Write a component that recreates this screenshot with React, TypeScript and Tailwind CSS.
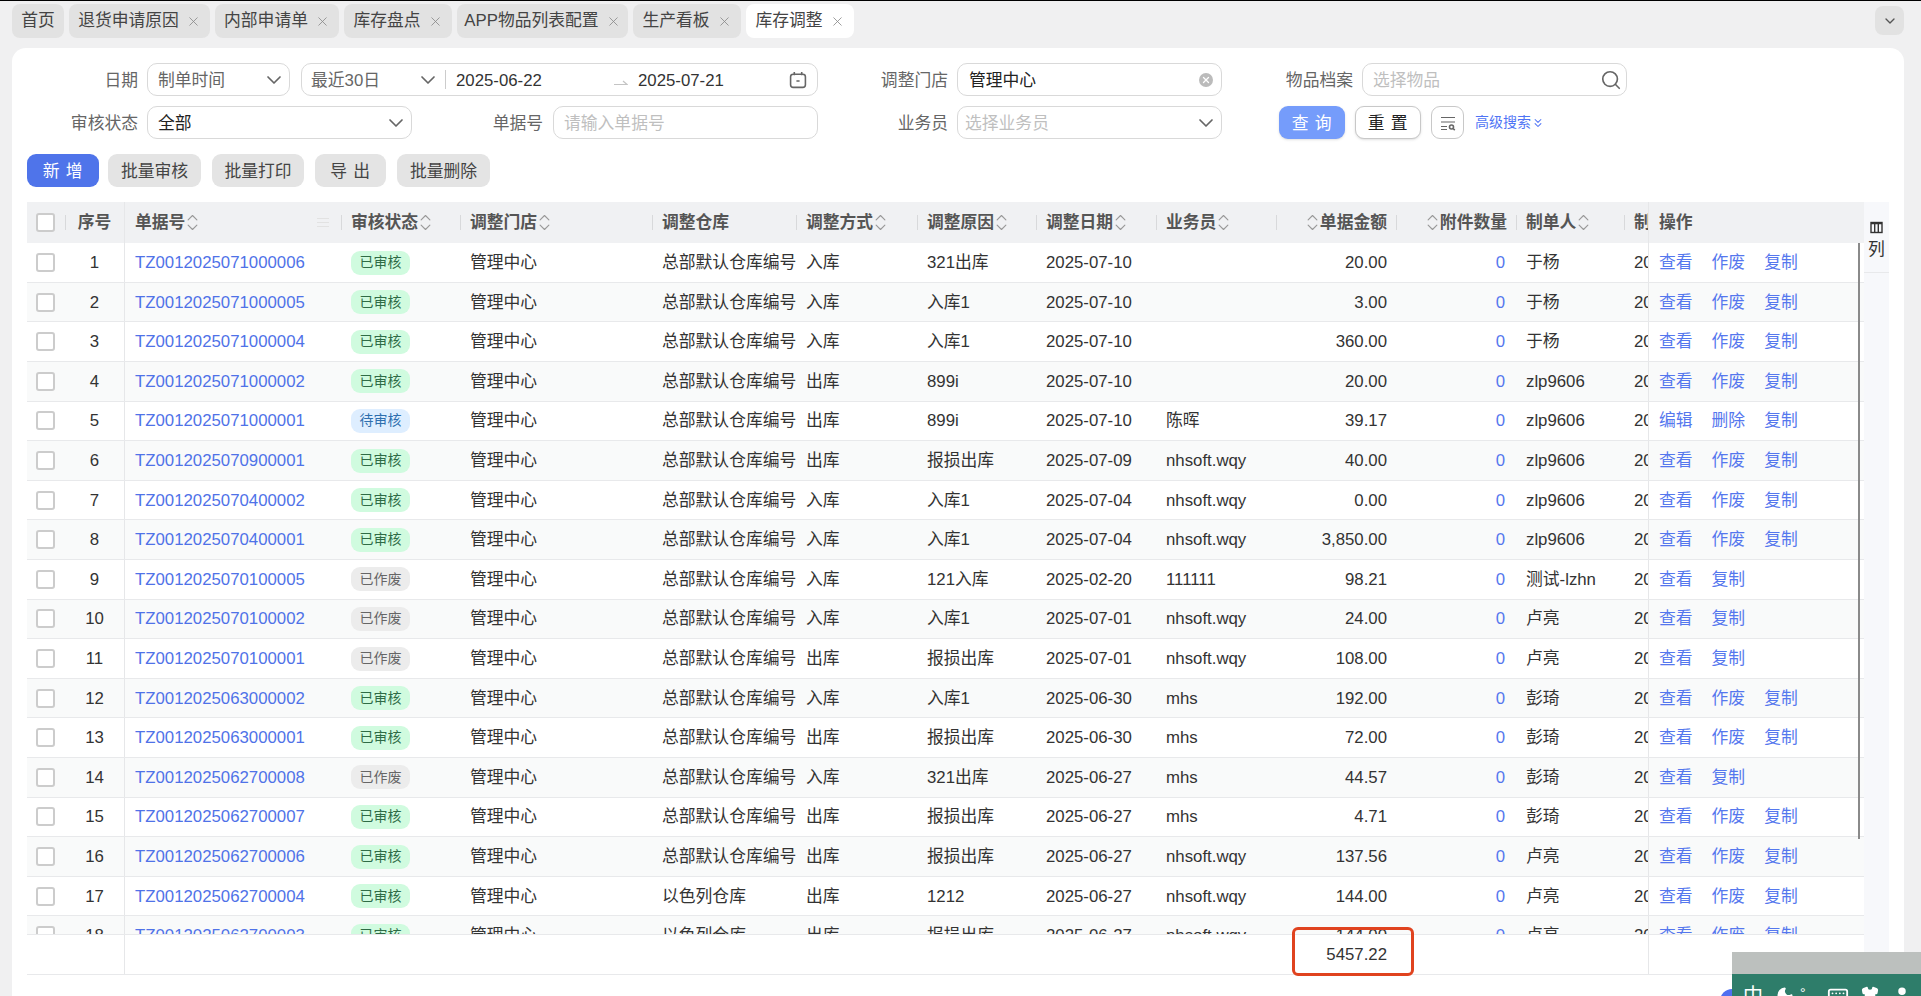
import React from "react";
import { ChevronDown, ChevronsDown, ChevronsUpDown, Keyboard, Moon, Search, Shirt, User, X } from "lucide-react";

const tabs = ["首页", "退货申请原因", "内部申请单", "库存盘点", "APP物品列表配置", "生产看板", "库存调整"];
const tabWidths = ["w-[52px]", "w-[141px]", "w-[124px]", "w-[108px]", "w-[171px]", "w-[108px]", "w-[108px]"];

const gridCols =
  "grid grid-cols-[38px_60px_216px_119px_192px_144px_121px_119px_120px_120px_120px_120px_108px_24px_216px]";

type Row = {
  id: string;
  status: "ok" | "wait" | "void";
  wh: string;
  way: string;
  reason: string;
  date: string;
  staff: string;
  amount: string;
  maker: string;
};

const main = "总部默认仓库编号";
const rows: Row[] = [
  { id: "TZ0012025071000006", status: "ok", wh: main, way: "入库", reason: "321出库", date: "2025-07-10", staff: "", amount: "20.00", maker: "于杨" },
  { id: "TZ0012025071000005", status: "ok", wh: main, way: "入库", reason: "入库1", date: "2025-07-10", staff: "", amount: "3.00", maker: "于杨" },
  { id: "TZ0012025071000004", status: "ok", wh: main, way: "入库", reason: "入库1", date: "2025-07-10", staff: "", amount: "360.00", maker: "于杨" },
  { id: "TZ0012025071000002", status: "ok", wh: main, way: "出库", reason: "899i", date: "2025-07-10", staff: "", amount: "20.00", maker: "zlp9606" },
  { id: "TZ0012025071000001", status: "wait", wh: main, way: "出库", reason: "899i", date: "2025-07-10", staff: "陈晖", amount: "39.17", maker: "zlp9606" },
  { id: "TZ0012025070900001", status: "ok", wh: main, way: "出库", reason: "报损出库", date: "2025-07-09", staff: "nhsoft.wqy", amount: "40.00", maker: "zlp9606" },
  { id: "TZ0012025070400002", status: "ok", wh: main, way: "入库", reason: "入库1", date: "2025-07-04", staff: "nhsoft.wqy", amount: "0.00", maker: "zlp9606" },
  { id: "TZ0012025070400001", status: "ok", wh: main, way: "入库", reason: "入库1", date: "2025-07-04", staff: "nhsoft.wqy", amount: "3,850.00", maker: "zlp9606" },
  { id: "TZ0012025070100005", status: "void", wh: main, way: "入库", reason: "121入库", date: "2025-02-20", staff: "111111", amount: "98.21", maker: "测试-lzhn" },
  { id: "TZ0012025070100002", status: "void", wh: main, way: "入库", reason: "入库1", date: "2025-07-01", staff: "nhsoft.wqy", amount: "24.00", maker: "卢亮" },
  { id: "TZ0012025070100001", status: "void", wh: main, way: "出库", reason: "报损出库", date: "2025-07-01", staff: "nhsoft.wqy", amount: "108.00", maker: "卢亮" },
  { id: "TZ0012025063000002", status: "ok", wh: main, way: "入库", reason: "入库1", date: "2025-06-30", staff: "mhs", amount: "192.00", maker: "彭琦" },
  { id: "TZ0012025063000001", status: "ok", wh: main, way: "出库", reason: "报损出库", date: "2025-06-30", staff: "mhs", amount: "72.00", maker: "彭琦" },
  { id: "TZ0012025062700008", status: "void", wh: main, way: "入库", reason: "321出库", date: "2025-06-27", staff: "mhs", amount: "44.57", maker: "彭琦" },
  { id: "TZ0012025062700007", status: "ok", wh: main, way: "出库", reason: "报损出库", date: "2025-06-27", staff: "mhs", amount: "4.71", maker: "彭琦" },
  { id: "TZ0012025062700006", status: "ok", wh: main, way: "出库", reason: "报损出库", date: "2025-06-27", staff: "nhsoft.wqy", amount: "137.56", maker: "卢亮" },
  { id: "TZ0012025062700004", status: "ok", wh: "以色列仓库", way: "出库", reason: "1212", date: "2025-06-27", staff: "nhsoft.wqy", amount: "144.00", maker: "卢亮" },
  { id: "TZ0012025062700003", status: "ok", wh: "以色列仓库", way: "出库", reason: "报损出库", date: "2025-06-27", staff: "nhsoft.wqy", amount: "144.00", maker: "卢亮" },
];

const badgeStyle = {
  ok: "bg-[#d0fbdf] text-[#2f6b46]",
  wait: "bg-[#deeeff] text-[#2f6fae]",
  void: "bg-[#ececec] text-[#666666]",
};
const badgeText = { ok: "已审核", wait: "待审核", void: "已作废" };

// the faint staff watermark that lies over the whole page
const watermarks = Array.from({ length: 24 }, (_, i) => i);

const Checkbox = () => <span className="block h-[19px] w-[19px] rounded-[3px] border-2 border-[#cccccc] bg-white" />;

const Field = ({ className, children }: { className: string; children: React.ReactNode }) => (
  <div className={`flex h-[33px] items-center rounded-[10px] border-[1.5px] border-[#d9d9d9] bg-white ${className}`}>
    {children}
  </div>
);

const Label = ({ className, children }: { className: string; children: React.ReactNode }) => (
  <div className={`shrink-0 pr-[9px] text-right text-[#666666] ${className}`}>{children}</div>
);

const GrayButton = ({ className, children }: { className: string; children: React.ReactNode }) => (
  <button className={`h-[33px] rounded-[9px] bg-[#e4e4e4] pt-[2px] text-[#444444] ${className}`}>{children}</button>
);

const Chevron = () => <ChevronDown size={24} strokeWidth={1.7} className="shrink-0 text-[#666666]" />;

const SortIcon = ({ right }: { right?: boolean }) => (
  <ChevronsUpDown
    size={21}
    strokeWidth={1.3}
    className={`shrink-0 text-[#999999] ${right ? "-mr-[3px] -ml-[6px]" : "-ml-[3px] -mr-[6px]"}`}
  />
);

const HeadCell = ({ title, sort, right, sep = true }: { title: string; sort?: boolean; right?: boolean; sep?: boolean }) => (
  <div className={`relative flex items-center overflow-hidden whitespace-nowrap ${right ? "justify-end pr-[9px]" : "pl-[10px]"}`}>
    {sep && <span className="absolute left-0 top-[13px] h-[15px] w-px bg-[#d8d9db]" />}
    {right && sort && <SortIcon right />}
    <span>{title}</span>
    {!right && sort && <SortIcon />}
  </div>
);

const Ops = ({ row }: { row: Row }) => {
  const links = row.status === "wait" ? ["编辑", "删除", "复制"] : row.status === "void" ? ["查看", "复制"] : ["查看", "作废", "复制"];
  return (
    <div className="flex items-center gap-[19px] border-l border-[#e6e7e9] pl-[10px] text-[#5577ee]">
      {links.map((l) => (
        <span key={l}>{l}</span>
      ))}
    </div>
  );
};

const CalendarIcon = () => (
  <svg width="18" height="18" viewBox="0 0 17 17" fill="none" stroke="#666666" strokeWidth="1.5" className="shrink-0">
    <rect x="1.5" y="3" width="14" height="12.5" rx="2.5" />
    <path d="M5 1v3M12 1v3M7 9.5h3" />
  </svg>
);

const TableSearchIcon = () => (
  <svg width="18" height="18" viewBox="0 0 18 18" fill="none" stroke="#666666" strokeWidth="1.2">
    <path d="M2 3.5h14M2 8h14M2 12.5h6M2 15.5h6" />
    <circle cx="12.5" cy="13" r="2" strokeWidth="1.6" />
    <path d="M14 14.5l1.8 1.6" strokeWidth="1.6" />
  </svg>
);

const ColumnsIcon = () => (
  <svg width="13" height="13" viewBox="0 0 13 13" fill="none" stroke="#333333" strokeWidth="1.4">
    <rect x="1" y="1.5" width="11" height="10" />
    <path d="M1 2.5h11M4.7 2v9.5M8.3 2v9.5" />
  </svg>
);

const App = () => {
  return (
    <div className="relative h-[996px] w-full overflow-hidden border-t border-black bg-[#f0f0f1] text-[16.8px] text-[#333333] [font-family:'Liberation_Sans','Noto_Sans_CJK_SC',sans-serif]">
      {/* tab strip */}
      <div className="flex h-[47px] items-start justify-between pl-[12px] pr-[17px] pt-[3px]">
        <div className="flex gap-[5px]">
          {tabs.map((t, i) => (
            <div
              key={t}
              className={`flex h-[34px] items-center justify-center gap-[7px] whitespace-nowrap rounded-[8px] ${tabWidths[i]} ${
                i === 6 ? "bg-white" : "bg-[#e2e2e2]"
              } text-[#444444]`}
            >
              {t}
              {i > 0 && <X size={15} strokeWidth={1.3} className="text-[#888888]" />}
            </div>
          ))}
        </div>
        <div className="mt-[2px] flex h-[29px] w-[29px] items-center justify-center rounded-[8px] bg-[#e2e2e2]">
          <ChevronDown size={16} strokeWidth={2} className="text-[#555555]" />
        </div>
      </div>

      {/* main card */}
      <div className="ml-[12px] mr-[17px] h-[960px] rounded-t-[14px] bg-white pt-[15px]">
        <div className="flex items-center">
          <Label className="w-[135px] pt-[2px]">日期</Label>
          <Field className="w-[143px] justify-between pl-[10px] pr-[3px] text-[#666666]">
            <span className="pt-[2px]">制单时间</span>
            <Chevron />
          </Field>
          <Field className="ml-[11px] w-[517px] pl-[9px] pr-[10px]">
            <span className="w-[105px] pt-[2px] text-[#666666]">最近30日</span>
            <Chevron />
            <span className="ml-[5px] h-[19px] w-px shrink-0 bg-[#cccccc]" />
            <span className="ml-[10px] w-[158px] pt-[2px]">2025-06-22</span>
            <svg width="14" height="8" viewBox="0 0 14 8" fill="none" stroke="#c4c4c4" strokeWidth="1.2" className="mt-[4px] shrink-0">
              <path d="M0 6.5h13L9 3" />
            </svg>
            <span className="ml-[10px] flex-1 pt-[2px]">2025-07-21</span>
            <CalendarIcon />
          </Field>
          <Label className="w-[139px] pt-[2px]">调整门店</Label>
          <Field className="w-[265px] justify-between pl-[11px] pr-[8px] text-[#222222]">
            <span className="pt-[2px]">管理中心</span>
            <span className="flex h-[14px] w-[14px] items-center justify-center rounded-full bg-[#bbbbbb]">
              <X size={10} strokeWidth={3} className="text-white" />
            </span>
          </Field>
          <Label className="w-[140px] pt-[2px]">物品档案</Label>
          <Field className="w-[265px] justify-between pl-[10px] pr-[4px] text-[#bfbfbf]">
            <span className="pt-[2px]">选择物品</span>
            <Search size={22} strokeWidth={1.8} className="text-[#666666]" />
          </Field>
        </div>

        <div className="mt-[10px] flex items-center">
          <Label className="w-[135px] pt-[3px]">审核状态</Label>
          <Field className="w-[265px] justify-between pl-[10px] pr-[3px] text-[#222222]">
            <span className="pt-[3px]">全部</span>
            <Chevron />
          </Field>
          <Label className="w-[141px] pr-[10px] pt-[3px]">单据号</Label>
          <Field className="w-[265px] pl-[10px] text-[#bfbfbf]">
            <span className="pt-[3px]">请输入单据号</span>
          </Field>
          <Label className="w-[139px] pt-[3px]">业务员</Label>
          <Field className="w-[265px] justify-between pl-[7px] pr-[3px] text-[#bfbfbf]">
            <span className="pt-[3px]">选择业务员</span>
            <Chevron />
          </Field>
          <button className="ml-[57px] h-[33px] w-[66px] rounded-[9px] bg-[#759cfb] pt-[2px] tracking-[0.8px] text-white shadow-sm">
            查 询
          </button>
          <button className="ml-[10px] h-[33px] w-[66px] rounded-[9px] border-[1.5px] border-[#c8c8c8] bg-white pt-[2px] tracking-[0.8px] text-[#222222] shadow-sm">
            重 置
          </button>
          <button className="ml-[10px] flex h-[33px] w-[33px] items-center justify-center rounded-[9px] border-[1.5px] border-[#c8c8c8] bg-white">
            <TableSearchIcon />
          </button>
          <span className="ml-[11px] flex items-center whitespace-nowrap text-[14px] text-[#4f74f5]">
            高级搜索
            <ChevronsDown size={14} strokeWidth={1.8} />
          </span>
        </div>

        <div className="ml-[15px] mt-[15px] flex items-center">
          <button className="h-[33px] w-[72px] rounded-[9px] bg-[#4f74ea] pt-[2px] tracking-[0.8px] text-white">新 增</button>
          <GrayButton className="ml-[9px] w-[93px]">批量审核</GrayButton>
          <GrayButton className="ml-[11px] w-[92px]">批量打印</GrayButton>
          <GrayButton className="ml-[11px] w-[71px] tracking-[0.8px]">导 出</GrayButton>
          <GrayButton className="ml-[11px] w-[93px]">批量删除</GrayButton>
        </div>

        {/* table plus the column switcher */}
        <div className="ml-[15px] mt-[15px] flex h-[760px]">
          <div className="relative w-[1837px] shrink-0">
            <div className={`${gridCols} h-[41px] bg-[#f0f1f3] font-bold text-[#555555]`}>
              <div className="flex items-center pl-[9px]">
                <Checkbox />
              </div>
              <div className="relative flex items-center justify-center border-r border-[#e6e7e9]">
                <span className="absolute left-0 top-[13px] h-[15px] w-px bg-[#d8d9db]" />
                序号
              </div>
              <div className="relative flex items-center pl-[10px]">
                单据号
                <SortIcon />
                <span className="absolute right-[12px] top-[16px] h-[9px] w-[12px] border-y border-[#e2e2e2] after:mt-[3px] after:block after:h-px after:bg-[#e2e2e2]" />
              </div>
              <HeadCell title="审核状态" sort />
              <HeadCell title="调整门店" sort />
              <HeadCell title="调整仓库" />
              <HeadCell title="调整方式" sort />
              <HeadCell title="调整原因" sort />
              <HeadCell title="调整日期" sort />
              <HeadCell title="业务员" sort />
              <HeadCell title="单据金额" sort right />
              <HeadCell title="附件数量" sort right />
              <HeadCell title="制单人" sort />
              <HeadCell title="制单时间" />
              <div className="flex items-center border-l border-[#e6e7e9] pl-[10px]">操作</div>
            </div>

            <div className="h-[691px] overflow-hidden pt-[0.3px]">
              {rows.map((r, i) => (
                <div
                  key={r.id}
                  className={`${gridCols} h-[39.6px] border-b border-[#e8e9eb] ${i % 2 === 1 ? "bg-[#f9fafa]" : "bg-white"}`}
                >
                  <div className="flex items-center pl-[9px]">
                    <Checkbox />
                  </div>
                  <div className="flex items-center justify-center border-r border-[#e6e7e9]">{i + 1}</div>
                  <div className="flex items-center pl-[10px] text-[#4f72e8]">{r.id}</div>
                  <div className="flex items-center pl-[10px]">
                    <span className={`flex h-[24px] w-[59px] items-center justify-center rounded-[9px] text-[14px] ${badgeStyle[r.status]}`}>
                      {badgeText[r.status]}
                    </span>
                  </div>
                  <div className="flex items-center pl-[10px]">管理中心</div>
                  <div className="flex items-center whitespace-nowrap pl-[10px]">{r.wh}</div>
                  <div className="flex items-center pl-[10px]">{r.way}</div>
                  <div className="flex items-center pl-[10px]">{r.reason}</div>
                  <div className="flex items-center pl-[10px]">{r.date}</div>
                  <div className="flex items-center pl-[10px]">{r.staff}</div>
                  <div className="flex items-center justify-end pr-[9px]">{r.amount}</div>
                  <div className="flex items-center justify-end pr-[11px] text-[#5577ee]">0</div>
                  <div className="flex items-center pl-[10px]">{r.maker}</div>
                  <div className="flex items-center overflow-hidden whitespace-nowrap pl-[10px]">{r.date}</div>
                  <Ops row={r} />
                </div>
              ))}
            </div>

            {/* summary row */}
            <div className={`${gridCols} h-[41px] border-y border-[#e8e9eb] bg-white`}>
              <div className="col-span-2 border-r border-[#e6e7e9]" />
              <div className="col-span-8" />
              <div className="flex items-center justify-end pr-[9px]">5457.22</div>
              <div className="col-span-3" />
              <div className="border-l border-[#e6e7e9]" />
            </div>

            {/* scroll thumb */}
            <span className="absolute left-[1831px] top-[41px] h-[596px] w-[2px] bg-[#8a8a8a]" />
            {/* hand-drawn highlight over the total */}
            <span className="absolute left-[1265px] top-[725px] h-[49px] w-[122px] rounded-[6px] border-[3px] border-[#e0431f]" />

            <div className="mt-[14px] flex justify-end pr-[120px]">
              <span className="h-[24px] w-[24px] rounded-full bg-[#4f6ff0]" />
            </div>
          </div>

          <div className="w-[25px] bg-[#f7f8fb]">
            <div className="flex h-[71px] flex-col items-center border-b border-[#e8e9eb] pt-[19px]">
              <ColumnsIcon />
              <span className="mt-[3px]">列</span>
            </div>
          </div>
        </div>
      </div>

      {/* watermark */}
      <div className="pointer-events-none absolute inset-0 grid grid-cols-6 grid-rows-4">
        {watermarks.map((n) => (
          <div key={n} className="flex items-center justify-center">
            <span className="-rotate-[38deg] whitespace-nowrap text-[26px] text-black/[0.02]">李兆乐-4527</span>
          </div>
        ))}
      </div>

      {/* input method toolbar lying over the page corner */}
      <div className="absolute left-[1732px] top-[951px] h-[45px] w-[189px] overflow-hidden">
        <div className="h-[22px] bg-[#bcc0be]" />
        <div className="flex h-[23px] items-start bg-[#2e7d6a] pl-[11px] pt-[12px] text-[20px] leading-none text-white">
          <span>中</span>
          <Moon size={18} fill="white" className="ml-[13px] shrink-0" />
          <span className="ml-[6px] w-[17px] text-[14px] leading-none">°,</span>
          <Keyboard size={22} className="ml-[10px] shrink-0" />
          <Shirt size={18} fill="white" className="ml-[12px] shrink-0" />
          <User size={18} fill="white" className="ml-[14px] shrink-0" />
        </div>
      </div>
    </div>
  );
};

export default App;
